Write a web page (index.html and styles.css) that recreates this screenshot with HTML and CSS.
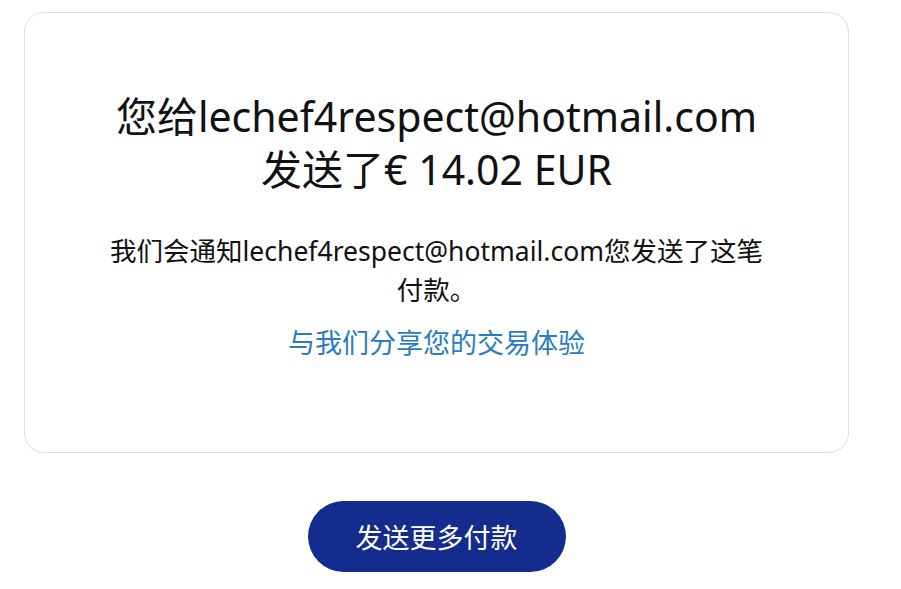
FILE: index.html
```html
<!DOCTYPE html>
<html lang="zh">
<head>
<meta charset="utf-8">
<link rel="stylesheet" href="styles.css">
</head>
<body>
<div class="page">
  <section class="card">
    <h1 class="title">您给lechef4respect@hotmail.com<br>发送了€ 14.02 EUR</h1>
    <p class="note">我们会通知lechef4respect@hotmail.com您发送了这笔<br>付款。</p>
    <a class="share" href="#">与我们分享您的交易体验</a>
  </section>
  <div class="actions">
    <button class="btn">发送更多付款</button>
  </div>
</div>
</body>
</html>
```
FILE: styles.css
```css
html, body {
  margin: 0;
  padding: 0;
  background: #ffffff;
}
body {
  font-family: "Noto Sans", "Noto Sans CJK SC", sans-serif;
  color: #111111;
}
.page {
  padding: 12px 0 0 24px;
  width: 825px;
}
.card {
  box-sizing: border-box;
  height: 441px;
  border: 1px solid #dedede;
  border-radius: 20px;
  display: flex;
  flex-direction: column;
  align-items: center;
  padding-top: 77px;
}
.title {
  margin: 0;
  font-weight: 400;
  font-size: 41px;
  line-height: 53px;
  text-align: center;
}
.note {
  margin: 36px 0 0;
  font-size: 26.5px;
  line-height: 39px;
  text-align: center;
}
.share {
  margin-top: 13px;
  font-size: 27px;
  line-height: 40px;
  color: #2b7bc2;
  text-decoration: none;
}
.actions {
  display: flex;
  justify-content: center;
  padding-top: 48px;
}
.btn {
  width: 258px;
  height: 71px;
  border: none;
  border-radius: 36px;
  background: #142c8e;
  color: #ffffff;
  font-family: "Noto Sans CJK SC", sans-serif;
  font-size: 27px;
  padding: 0;
}
```
